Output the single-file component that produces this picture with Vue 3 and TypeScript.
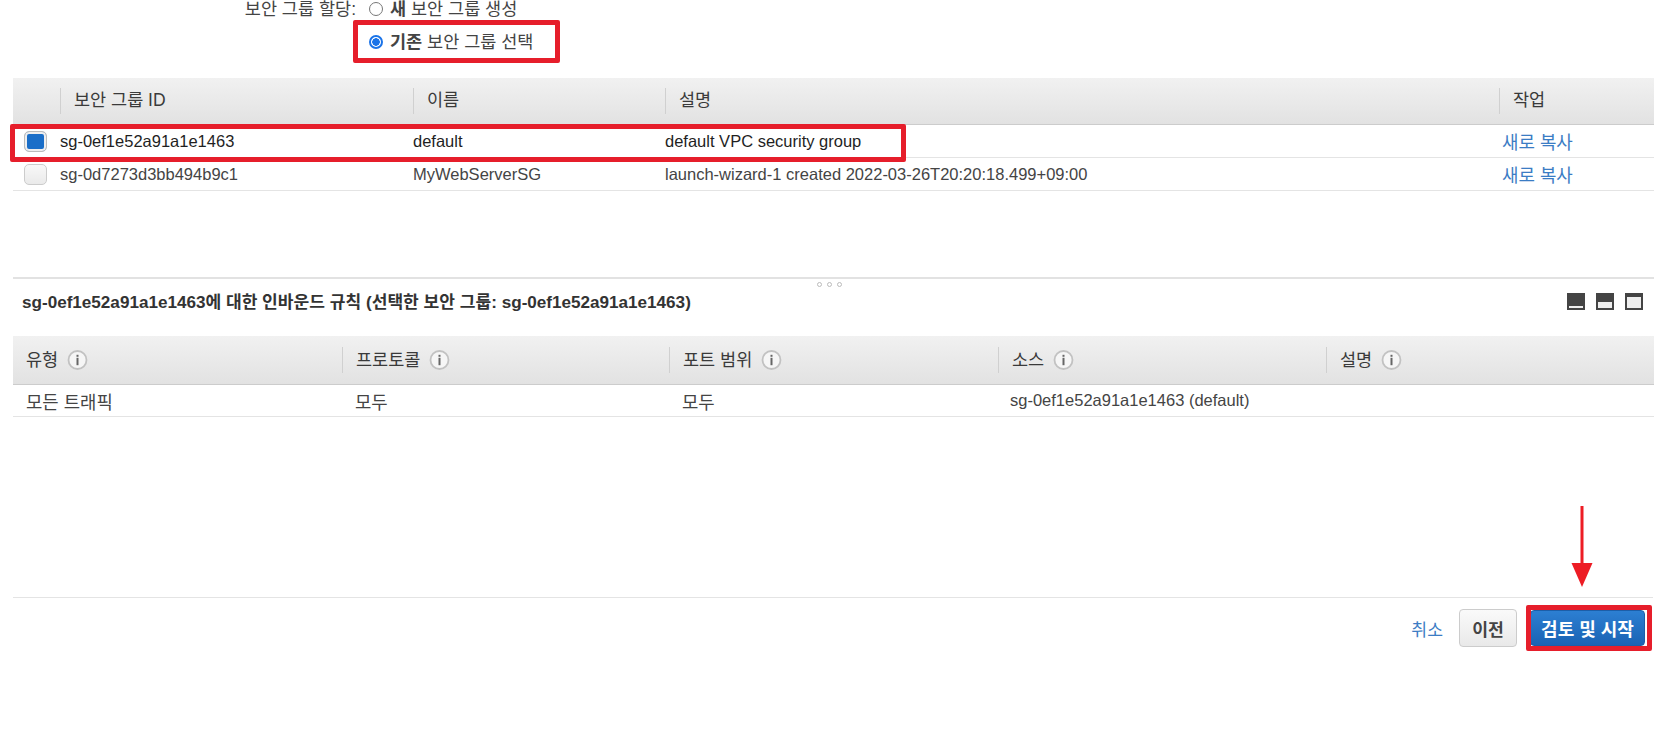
<script setup lang="ts">
interface SgRow { id: string; name: string; desc: string; selected: boolean }
const groups: SgRow[] = [
  { id: 'sg-0ef1e52a91a1e1463', name: 'default', desc: 'default VPC security group', selected: true },
  { id: 'sg-0d7273d3bb494b9c1', name: 'MyWebServerSG', desc: 'launch-wizard-1 created 2022-03-26T20:20:18.499+09:00', selected: false },
]
const sgHeads = ['보안 그룹 ID', '이름', '설명', '작업']
const ruleHeads = ['유형', '프로토콜', '포트 범위', '소스', '설명']
const ruleCells = ['모든 트래픽', '모두', '모두', 'sg-0ef1e52a91a1e1463 (default)', '']
const panes = [1, 2, 3]
</script>

<template>
  <div class="page">
    <div class="assign">
      <div class="assign-label">보안 그룹 할당:</div>
      <div class="assign-opts">
        <label class="opt">
          <span class="radio"></span>
          <span><b>새</b> 보안 그룹 생성</span>
        </label>
        <label class="opt">
          <span class="radio on"></span>
          <span><b>기존</b> 보안 그룹 선택</span>
        </label>
      </div>
    </div>

    <section class="sg-table">
      <div class="sg-row head">
        <div></div>
        <div v-for="h in sgHeads" :key="h" class="th">{{ h }}</div>
      </div>
      <div v-for="g in groups" :key="g.id" class="sg-row body" :class="{ sel: g.selected }">
        <div class="check-cell"><span class="check" :class="{ on: g.selected }"></span></div>
        <div>{{ g.id }}</div>
        <div>{{ g.name }}</div>
        <div>{{ g.desc }}</div>
        <a class="link copy">새로 복사</a>
      </div>
    </section>

    <section class="panel">
      <div class="grip"><i></i><i></i><i></i></div>
      <div class="title-row">
        <div class="title">sg-0ef1e52a91a1e1463에 대한 인바운드 규칙 (선택한 보안 그룹: sg-0ef1e52a91a1e1463)</div>
        <div class="panes">
          <span v-for="p in panes" :key="p" class="pane"><span class="pane-win"></span></span>
        </div>
      </div>
      <div class="rule-row head">
        <div v-for="h in ruleHeads" :key="h" class="th">
          {{ h }}
          <svg class="info" width="21" height="20" viewBox="0 0 21 20">
            <circle cx="10.500" cy="10" r="9" fill="#f6f6f6" stroke="#c2c2c2" stroke-width="1.800" />
            <rect x="9.500" y="4.800" width="2" height="2" fill="#666" />
            <rect x="9.500" y="7.800" width="2" height="7.400" fill="#666" />
          </svg>
        </div>
      </div>
      <div class="rule-row body">
        <div v-for="(c, i) in ruleCells" :key="i" class="td" :class="{ latin: i === 3 }">{{ c }}</div>
      </div>
    </section>

    <footer class="footer">
      <a class="link cancel">취소</a>
      <button class="btn prev" type="button">이전</button>
      <button class="btn primary" type="button">검토 및 시작</button>
    </footer>

    <div class="mark mark-radio"></div>
    <div class="mark mark-row"></div>
    <div class="mark mark-btn"></div>
    <svg class="arrow" width="24" height="82" viewBox="0 0 24 82">
      <rect x="10.500" y="0" width="3" height="60" fill="#ed1c24" />
      <path d="M1.500 57H22.500L12 81Z" fill="#ed1c24" />
    </svg>
  </div>
</template>

<style>
body { background: #fff; }
</style>

<style scoped>
.page {
  position: relative;
  width: 1663px;
  height: 743px;
  overflow: hidden;
  background: #fff;
  color: #444;
  font-family: "Liberation Sans", "Noto Sans CJK KR", sans-serif;
  font-size: 16.5px;
}
.assign {
  display: flex;
  gap: 13px;
  font-size: 17.5px;
  line-height: 18px;
  color: #444;
}
.assign-label { width: 356px; text-align: right; }
.assign-opts { display: flex; flex-direction: column; gap: 15px; }
.opt { display: flex; align-items: center; gap: 7px; }
.radio {
  width: 14px;
  height: 14px;
  box-sizing: border-box;
  border-radius: 50%;
  border: 1.500px solid #777;
  background: #fff;
}
.radio.on { border: 2px solid #1a73e8; background: radial-gradient(circle, #1a73e8 0 3.500px, #fff 4px); }

.sg-table { margin: 27px 9px 0 13px; }
.sg-row { display: grid; grid-template-columns: 47px 353px 252px 834px 155px; align-items: center; }
.head {
  background: linear-gradient(#f1f1f1, #e2e2e2);
  border-bottom: 1px solid #ccc;
  font-size: 17.5px;
  color: #3a3a3a;
}
.sg-row.head { height: 46px; }
.th {
  display: flex;
  align-items: center;
  gap: 9px;
  height: 26px;
  box-sizing: border-box;
  border-left: 1px solid #d0d0d0;
  padding: 0 0 5px 13px;
}
.sg-row.body { height: 32px; border-bottom: 1px solid #e4e4e4; }
.sg-row.sel { color: #1f1f1f; }
.check-cell { display: flex; padding-left: 11px; }
.check {
  width: 23px;
  height: 21px;
  box-sizing: border-box;
  border: 1px solid #ccc;
  border-radius: 5px;
  background: linear-gradient(#f8f8f8, #eaeaea);
}
.check.on { border: 1px solid #bbb; background: #e8e8e8; box-shadow: inset 0 0 0 2px #eee, inset 0 0 0 12px #1a6ec8; }
.link { color: #3b7cc4; }
.copy { padding-left: 3px; font-size: 17.9px; }

.panel { position: relative; margin: 86px 9px 0 13px; border-top: 2px solid #e2e2e2; }
.grip { position: absolute; left: 804px; top: 3px; display: flex; gap: 5px; }
.grip i { width: 5px; height: 5px; box-sizing: border-box; border-radius: 50%; border: 1px solid #bbb; }
.title-row { display: flex; justify-content: space-between; align-items: center; height: 44px; box-sizing: border-box; padding: 0 11px 2px 9px; }
.title { font-weight: 700; font-size: 17.1px; color: #333; }
.panes { display: flex; gap: 11px; margin-top: 2px; }
.pane { display: flex; align-items: flex-end; justify-content: center; width: 18px; height: 17px; background: #444; padding: 0 2px 2px; box-sizing: border-box; }
.pane-win { width: 100%; background: #eee; }
.pane:nth-child(1) .pane-win { height: 2px; }
.pane:nth-child(2) .pane-win { height: 6px; }
.pane:nth-child(3) .pane-win { height: 11px; }
.rule-row { display: grid; grid-template-columns: 329px 327px 329px 328px 328px; align-items: center; }
.rule-row.head { height: 48px; margin-top: 13px; }
.rule-row .th { padding-bottom: 4px; }
.rule-row .th:first-child { border-left: 0; }
.info { flex: none; margin-top: 4px; }
.rule-row.body { height: 31px; border-bottom: 1px solid #e4e4e4; }
.td { padding-left: 13px; font-size: 17.8px; }
.td.latin { padding-left: 12px; font-size: 16.5px; }

.footer {
  display: flex;
  justify-content: flex-end;
  align-items: center;
  gap: 16px;
  margin: 180px 10px 0 13px;
  padding-top: 11px;
  border-top: 1px solid #e4e4e4;
}
.cancel { font-size: 17.2px; }
.btn {
  font-family: inherit;
  font-size: 17.2px;
  font-weight: 700;
  height: 38px;
  border-radius: 4px;
  box-sizing: border-box;
}
.prev { width: 58px; padding: 0; color: #444; border: 1px solid #ccc; background: linear-gradient(#fafafa, #e9e9e9); }
.primary {
  width: 115px;
  height: 36px;
  margin-left: -3px;
  margin-right: 8px;
  padding: 0;
  font-size: 18px;
  color: #fff;
  border: 1px solid #1c5ea8;
  background: linear-gradient(#2c7fd2, #1a63b4);
}

.mark { position: absolute; box-sizing: border-box; border: 5px solid #e61e2b; border-radius: 2px; }
.mark-radio { left: 353px; top: 20px; width: 207px; height: 43px; }
.mark-row { left: 10px; top: 124px; width: 896px; height: 38px; }
.mark-btn { left: 1526px; top: 605px; width: 126px; height: 46px; }
.arrow { position: absolute; left: 1570px; top: 506px; }
</style>
